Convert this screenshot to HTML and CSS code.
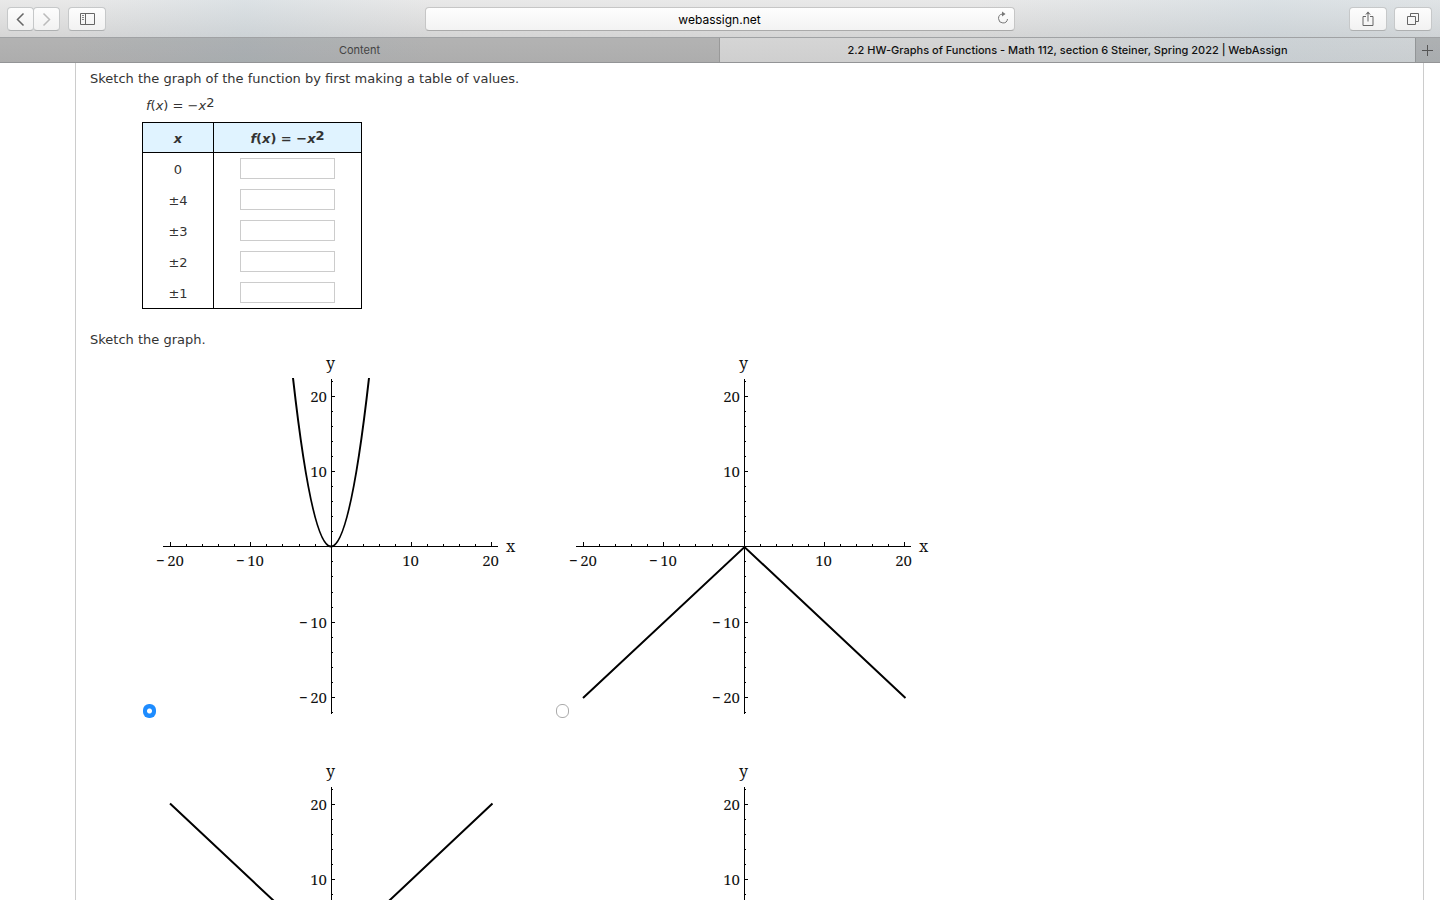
FILE: index.html
```html
<!DOCTYPE html>
<html lang="en">
<head>
<meta charset="utf-8">
<title>2.2 HW-Graphs of Functions</title>
<link rel="stylesheet" href="styles.css">
</head>
<body>
<svg class="defs" width="0" height="0" aria-hidden="true">
  <defs>
    <g id="axes">
      <path class="axis" d="M175.5 24V359M7 191.5H342"/>
      <path class="axis" d="M14.5 187v4M94.5 187v4M255.5 187v4M335.5 187v4M176 41.5h3M176 116.5h3M176 267.5h3M176 342.5h3"/>
      <path class="axis" d="M30.5 189v2M46.5 189v2M62.5 189v2M78.5 189v2M110.5 189v2M126.5 189v2M143.5 189v2M159.5 189v2M191.5 189v2M207.5 189v2M223.5 189v2M239.5 189v2M271.5 189v2M287.5 189v2M303.5 189v2M319.5 189v2"/>
      <path class="axis" d="M176 26.5h1M176 56.5h1M176 71.5h1M176 86.5h1M176 101.5h1M176 131.5h1M176 146.5h1M176 161.5h1M176 176.5h1M176 206.5h1M176 221.5h1M176 237.5h1M176 252.5h1M176 282.5h1M176 297.5h1M176 312.5h1M176 327.5h1M176 357.5h1"/>
      <g class="tick-label">
        <text class="name" x="170" y="14">y</text>
        <text class="name" x="350" y="197">x</text>
        <text class="end" x="171" y="47">20</text>
        <text class="end" x="171" y="122">10</text>
        <text class="end" x="171" y="273">−&#8201;10</text>
        <text class="end" x="171" y="348">−&#8201;20</text>
        <text class="end" x="28" y="211">−&#8201;20</text>
        <text class="end" x="108" y="211">−&#8201;10</text>
        <text class="end" x="263" y="211">10</text>
        <text class="end" x="343" y="211">20</text>
      </g>
    </g>
  </defs>
</svg>

<header class="browser">
  <div class="toolbar">
    <div class="side">
      <div class="nav">
        <button class="tool narrow" aria-label="Back"><svg width="24" height="22"><path d="M14.500 5.500L8.500 11.500L14.500 17.500" stroke="#666" stroke-width="1.500" fill="none"/></svg></button>
        <button class="tool narrow" aria-label="Forward"><svg width="24" height="22"><path d="M8.500 5.500L14.500 11.500L8.500 17.500" stroke="#bbb" stroke-width="1.500" fill="none"/></svg></button>
      </div>
      <button class="tool" aria-label="Show sidebar"><svg width="16" height="12"><path d="M1.500.5h14v11h-14zM6.500.5v11" stroke="#666" fill="none"/><path d="M3 2.500h2M3 4.500h2M3 6.500h2" stroke="#888"/></svg></button>
    </div>
    <div class="address">
      <input type="text" value="webassign.net" aria-label="Address">
      <button class="reload" aria-label="Reload"><svg width="14" height="16"><path d="M6.500 3A4.500 4.500 0 1 0 11.500 8" stroke="#777" fill="none"/><path d="M6 .5v5L9.500 3z" fill="#777"/></svg></button>
    </div>
    <div class="side right">
      <button class="tool" aria-label="Share"><svg width="14" height="16"><path d="M5 5.500H2v9h10v-9H9M7 10.500V1.500" stroke="#666" fill="none"/><path d="M4 4L7 .5L10 4L7 2.500z" fill="#666"/></svg></button>
      <button class="tool" aria-label="Show tabs"><svg width="14" height="14"><path d="M1.500 4.500h8v8h-8zM4.500 4V1.500h8v8H10" stroke="#666" fill="none"/></svg></button>
    </div>
  </div>
  <nav class="tabs">
    <a class="tab" href="#">Content</a>
    <a class="tab active" href="#">2.2 HW-Graphs of Functions - Math 112, section 6 Steiner, Spring 2022 | WebAssign</a>
    <button class="new-tab" aria-label="New tab"><svg width="14" height="12"><path d="M6.500 1v11M1 6.500h11" stroke="#555"/></svg></button>
  </nav>
</header>

<main class="page">
  <p class="prompt">Sketch the graph of the function by first making a table of values.</p>
  <p class="formula"><i>f</i>(<i>x</i>) = −<i>x</i><sup>2</sup></p>
  <table class="values">
    <thead>
      <tr><th id="colx"><i>x</i></th><th id="colf"><i>f</i>(<i>x</i>) = −<i>x</i><sup>2</sup></th></tr>
    </thead>
    <tbody>
      <tr><td id="r0">0</td><td><input type="text" aria-labelledby="r0 colf"></td></tr>
      <tr><td id="r4">±4</td><td><input type="text" aria-labelledby="r4 colf"></td></tr>
      <tr><td id="r3">±3</td><td><input type="text" aria-labelledby="r3 colf"></td></tr>
      <tr><td id="r2">±2</td><td><input type="text" aria-labelledby="r2 colf"></td></tr>
      <tr><td id="r1">±1</td><td><input type="text" aria-labelledby="r1 colf"></td></tr>
    </tbody>
  </table>
  <p class="prompt">Sketch the graph.</p>
  <div class="choices">
    <label class="choice"><input type="radio" name="graph" aria-label="Upward parabola" checked>
      <svg width="370" height="363"><use href="#axes"/><path class="curve" d="M137 23Q175 360 213 23"/></svg></label>
    <label class="choice"><input type="radio" name="graph" aria-label="Downward V">
      <svg width="370" height="363"><use href="#axes"/><path class="curve" d="M14 343L175.500 192L336.500 343"/></svg></label>
    <label class="choice"><input type="radio" name="graph" aria-label="Upward V">
      <svg width="370" height="363"><use href="#axes"/><path class="curve" d="M14 40.500L175.500 192L336.500 40.500"/></svg></label>
    <label class="choice"><input type="radio" name="graph" aria-label="Downward parabola">
      <svg width="370" height="363"><use href="#axes"/><path class="curve" d="M137 360Q175 23 213 360"/></svg></label>
  </div>
</main>
</body>
</html>
```
FILE: styles.css
```css
* { box-sizing: border-box; }
body {
  margin: 0;
  height: 100vh;
  display: flex;
  flex-direction: column;
  overflow: hidden;
  background: #fff;
  color: #333;
  font: 13px/16px Verdana, "DejaVu Sans", sans-serif;
}
button { padding: 0; border: 0; background: none; }
svg { display: block; }
.defs { position: absolute; }

.browser {
  flex: none;
  color: #000;
  font-family: Inter, "Liberation Sans", sans-serif;
  background:
    linear-gradient(90deg, rgba(175, 200, 215, 0) 5%, rgba(175, 200, 215, .22) 17%, rgba(175, 200, 215, 0) 30%, rgba(175, 200, 215, 0) 68%, rgba(175, 200, 215, .24) 88%, rgba(175, 200, 215, .16)),
    linear-gradient(#e9e9e9, #d5d5d5 38px, #cfcfcf);
  border-bottom: 1px solid #939496;
}
.toolbar {
  height: 38px;
  display: flex;
  align-items: center;
  justify-content: space-between;
  padding: 1px 8px 0 7px;
  border-bottom: 1px solid #a0a2a4;
}
.side { flex: 1; display: flex; gap: 8px; }
.side.right { justify-content: flex-end; gap: 7px; }
.nav { display: flex; }
.tool {
  width: 38px;
  height: 24px;
  display: flex;
  align-items: center;
  justify-content: center;
  border: 1px solid #c6c8c9;
  border-bottom-color: #aeb0b1;
  border-radius: 4px;
  background: linear-gradient(#fdfdfd, #f2f2f2);
}
.tool.narrow { width: 27px; }
.tool.narrow + .narrow { margin-left: -1px; }
.address { position: relative; flex: 0 1 590px; }
.address input {
  width: 100%;
  height: 24px;
  display: block;
  padding: 0;
  border: 1px solid #c6c6c6;
  border-bottom-color: #aaa;
  border-radius: 4px;
  background: linear-gradient(#fefefe, #f3f3f3);
  color: #000;
  font: 12px Inter, "Liberation Sans", sans-serif;
  text-align: center;
}
.reload { position: absolute; right: 5px; top: 4px; }
.tabs { height: 24px; display: flex; }
.tab {
  flex: 1;
  color: #444;
  font-size: 11px;
  line-height: 24px;
  text-align: center;
  text-decoration: none;
  white-space: nowrap;
  background: rgba(0, 0, 0, .16);
}
.tab.active {
  flex: 0 0 696px;
  border-left: 1px solid #999;
  background: none;
  color: #111;
  font-weight: 500;
}
.new-tab {
  width: 25px;
  display: flex;
  align-items: center;
  justify-content: center;
  border-left: 1px solid #929597;
  background: rgba(0, 0, 0, .16);
}

.page {
  flex: 1;
  min-height: 0;
  overflow: hidden;
  margin: 0 16px 0 75px;
  padding: 8px 14px 0;
  border: solid #ccc;
  border-width: 0 1px;
}
.prompt { margin: 0; }
.formula { margin: 11px 0 8px 56px; }
sup { font-size: 13px; line-height: 0; vertical-align: 3px; }
.values {
  width: 220px;
  margin: 0 0 23px 52px;
  border: 1px solid #000;
  border-spacing: 0;
  text-align: center;
}
.values th {
  height: 30px;
  padding: 2px 0 0;
  border-bottom: 1px solid #000;
  background: #e0f3ff;
}
.values td { height: 31px; padding: 2px 0 0; }
.values tr > :first-child { width: 71px; border-right: 1px solid #000; }
.values td:last-child { padding: 0; }
.values input {
  display: block;
  width: 95px;
  height: 21px;
  margin: 0 auto;
  border: 1px solid #ccc;
  background: #fff;
}
.choices {
  display: grid;
  grid-template-columns: repeat(2, 413px);
  row-gap: 45px;
  margin: 7px 0 0 53px;
}
.choice { display: flex; align-items: flex-end; }
.choice input {
  appearance: none;
  width: 13px;
  height: 14px;
  margin: 0;
  border: 1px solid #aaa;
  border-radius: 6px;
  background: #fff;
}
.choice input:checked {
  border: 0;
  background: radial-gradient(circle, #fff 2px, #1e8cff 3px);
}
.axis { stroke: #000; fill: none; }
.curve { stroke: #000; stroke-width: 2px; fill: none; }
.tick-label { fill: #111; font: 15px "Noto Serif", "Droid Serif", "Liberation Serif", serif; }
.tick-label .name { font-size: 16px; }
.end { text-anchor: end; }
```
